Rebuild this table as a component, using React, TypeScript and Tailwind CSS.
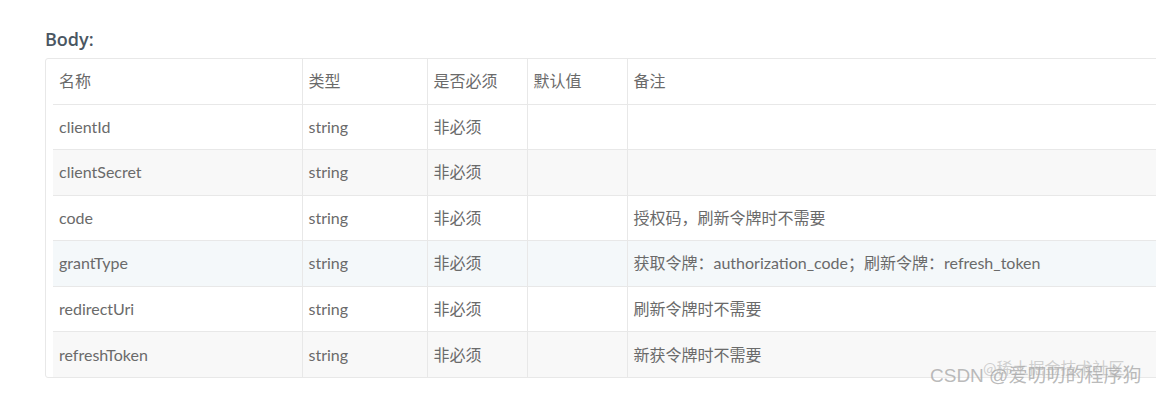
const rows = [
  { name: "clientId", type: "string", required: "非必须", def: "", note: "" },
  { name: "clientSecret", type: "string", required: "非必须", def: "", note: "" },
  { name: "code", type: "string", required: "非必须", def: "", note: "授权码，刷新令牌时不需要" },
  {
    name: "grantType",
    type: "string",
    required: "非必须",
    def: "",
    note: "获取令牌：authorization_code；刷新令牌：refresh_token",
  },
  { name: "redirectUri", type: "string", required: "非必须", def: "", note: "刷新令牌时不需要" },
  { name: "refreshToken", type: "string", required: "非必须", def: "", note: "新获令牌时不需要" },
];

const headers = ["名称", "类型", "是否必须", "默认值", "备注"];
const widths = ["w-[249px]", "w-[125px]", "w-[100px]", "w-[100px]", ""];

export default function App() {
  return (
    <div
      className="relative h-[397px] w-[1156px] overflow-hidden bg-white pl-[45px] pt-[27px]"
      style={{ fontFamily: 'Lato, "Noto Sans CJK SC", sans-serif' }}
    >
      <div
        className="mb-[7px] text-[18px] font-semibold leading-[24px] text-[#4a5662]"
        style={{ fontFamily: '"Open Sans", "Noto Sans CJK SC", sans-serif' }}
      >
        Body:
      </div>

      <div className="w-[1160px] rounded-[3px] border border-[#e8e8e8] pl-[7px]">
        <table className="w-full table-fixed border-collapse text-[16px] text-[#6a6a6a]">
          <thead>
            <tr className="h-[45px] border-b border-[#e8e8e8]">
              {headers.map((h, i) => (
                <th
                  key={h}
                  className={`${widths[i]} border-l border-[#e8e8e8] px-[6px] text-left font-normal first:border-l-0`}
                >
                  {h}
                </th>
              ))}
            </tr>
          </thead>
          <tbody>
            {rows.map((r, idx) => (
              <tr
                key={r.name}
                className={`h-[45.5px] border-b border-[#e8e8e8] last:border-b-0 ${
                  r.name === "grantType"
                    ? "bg-[#f4f8fa]"
                    : idx % 2 === 1
                    ? "bg-[#f8f8f8]"
                    : "bg-white"
                }`}
              >
                <td className="px-[6px]">{r.name}</td>
                <td className="border-l border-[#e8e8e8] px-[6px]">{r.type}</td>
                <td className="border-l border-[#e8e8e8] px-[6px]">{r.required}</td>
                <td className="border-l border-[#e8e8e8] px-[6px]">{r.def}</td>
                <td className="border-l border-[#e8e8e8] px-[6px] whitespace-nowrap">{r.note}</td>
              </tr>
            ))}
          </tbody>
        </table>
      </div>

      {/* 水印 */}
      <div className="pointer-events-none absolute left-[983px] top-[358px] text-[16px] leading-[20px] text-[#bdbdbd]/70">
        @稀土掘金技术社区
      </div>
      <div
        className="pointer-events-none absolute left-[930px] top-[364px] text-[19px] leading-[24px] text-[#a8a8a8]/80"
        style={{ fontFamily: '"Liberation Sans", "Noto Sans CJK SC", sans-serif' }}
      >
        CSDN @爱叨叨的程序狗
      </div>
    </div>
  );
}
